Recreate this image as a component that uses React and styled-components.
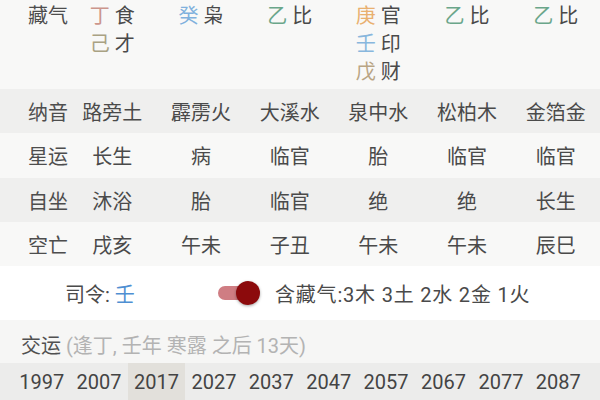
import React from "react";
import styled, { createGlobalStyle } from "styled-components";

const GlobalStyle = createGlobalStyle`
  body {
    margin: 0;
    background: #ffffff;
    font-family: "Roboto", "Noto Sans CJK SC", sans-serif;
    color: #4a4a4a;
  }
`;

const stemColors = {
  丁: "#cc968c",
  己: "#a9a283",
  癸: "#80b1dd",
  乙: "#6aa68a",
  庚: "#e9b06f",
  壬: "#88b7dd",
  戊: "#b9a584",
};

const hidden = [
  [["丁", "食"], ["己", "才"]],
  [["癸", "枭"]],
  [["乙", "比"]],
  [["庚", "官"], ["壬", "印"], ["戊", "财"]],
  [["乙", "比"]],
  [["乙", "比"]],
];

const rows = [
  { label: "纳音", cells: ["路旁土", "霹雳火", "大溪水", "泉中水", "松柏木", "金箔金"], dark: true, h: 44 },
  { label: "星运", cells: ["长生", "病", "临官", "胎", "临官", "临官"], h: 45 },
  { label: "自坐", cells: ["沐浴", "胎", "临官", "绝", "绝", "长生"], dark: true, h: 44 },
  { label: "空亡", cells: ["戌亥", "午未", "子丑", "午未", "午未", "辰巳"], h: 44 },
];

const years = [1997, 2007, 2017, 2027, 2037, 2047, 2057, 2067, 2077, 2087];

export default function App() {
  return (
    <>
      <GlobalStyle />
      <Page>
        <TopRow>
          <Label>藏气</Label>
          {hidden.map((col, i) => (
            <StemCell key={i}>
              {col.map(([stem, god]) => (
                <StemLine key={stem}>
                  <Stem $color={stemColors[stem]}>{stem}</Stem> {god}
                </StemLine>
              ))}
            </StemCell>
          ))}
        </TopRow>
        {rows.map((r) => (
          <Row key={r.label} $dark={r.dark} $h={r.h}>
            <Label>{r.label}</Label>
            {r.cells.map((c, i) => (
              <Cell key={i}>{c}</Cell>
            ))}
          </Row>
        ))}
        <CommandRow>
          <Command>
            司令: <Stem $color="#4f8fd2">壬</Stem>
          </Command>
          <Toggle>
            <Knob />
          </Toggle>
          <Summary>含藏气:3木 3土 2水 2金 1火</Summary>
        </CommandRow>
        <LuckHeader>
          交运 <Muted>(逢丁, 壬年 寒露 之后 13天)</Muted>
        </LuckHeader>
        <YearRow>
          {years.map((y) => (
            <Year key={y} $active={y === 2017}>
              {y}
            </Year>
          ))}
        </YearRow>
      </Page>
    </>
  );
}

const Page = styled.div`
  width: 600px;
  height: 400px;
  overflow: hidden;
  font-size: 20px;
`;

const TopRow = styled.div`
  display: grid;
  grid-template-columns: 68px repeat(6, 1fr);
  align-items: start;
  height: 89px;
  padding-top: 2px;
  box-sizing: border-box;
  background: #f8f8f7;
  line-height: 28px;
`;

const Row = styled.div`
  display: grid;
  grid-template-columns: 68px repeat(6, 1fr);
  align-items: center;
  height: ${(p) => p.$h}px;
  background: ${(p) => (p.$dark ? "#efefee" : "#f8f8f7")};
`;

const Label = styled.div`
  padding-left: 28px;
  white-space: nowrap;
  color: #4d4d4d;
`;

const Cell = styled.div`
  text-align: center;
  white-space: nowrap;
`;

const StemCell = styled.div`
  display: flex;
  flex-direction: column;
  align-items: center;
`;

const StemLine = styled.div`
  white-space: nowrap;
`;

const Stem = styled.span`
  color: ${(p) => p.$color};
`;

const CommandRow = styled.div`
  display: flex;
  align-items: center;
  height: 54px;
  padding-left: 65px;
  background: #ffffff;
`;

const Command = styled.div`
  width: 153px;
  white-space: nowrap;
`;

const Toggle = styled.div`
  position: relative;
  width: 32px;
  height: 14px;
  border-radius: 7px;
  background: #cf7d83;
  margin-right: 25px;
`;

const Knob = styled.div`
  position: absolute;
  left: 18px;
  top: -5px;
  width: 24px;
  height: 24px;
  border-radius: 50%;
  background: #8c0a0c;
  box-shadow: 0 1px 3px rgba(0, 0, 0, 0.35);
`;

const Summary = styled.div`
  white-space: nowrap;
  letter-spacing: 0.8px;
`;

const LuckHeader = styled.div`
  display: flex;
  align-items: center;
  gap: 5px;
  height: 43px;
  padding: 6px 0 0 21px;
  box-sizing: border-box;
  background: #f6f6f5;
  font-size: 20px;
  color: #505050;
`;

const Muted = styled.span`
  color: #b3b3b3;
`;

const YearRow = styled.div`
  display: grid;
  grid-template-columns: repeat(10, 1fr);
  padding: 0 13px;
  height: 40px;
  background: #ececeb;
`;

const Year = styled.div`
  text-align: center;
  line-height: 38px;
  font-size: 20px;
  color: #444444;
  background: ${(p) => (p.$active ? "#e2e0db" : "transparent")};
`;
